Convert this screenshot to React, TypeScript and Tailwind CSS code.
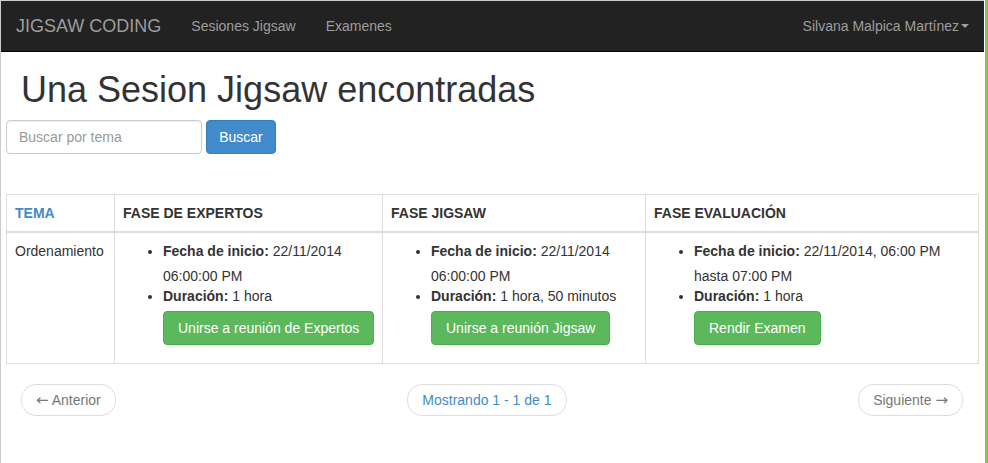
import { useState } from "react"

type Phase = {
    title: string
    start: [string, string]
    duration: string
    action: string
}

const phases: Phase[] = [
    {
        title: "FASE DE EXPERTOS",
        start: ["22/11/2014", "06:00:00 PM"],
        duration: "1 hora",
        action: "Unirse a reunión de Expertos"
    },
    {
        title: "FASE JIGSAW",
        start: ["22/11/2014", "06:00:00 PM"],
        duration: "1 hora, 50 minutos",
        action: "Unirse a reunión Jigsaw"
    },
    {
        title: "FASE EVALUACIÓN",
        start: ["22/11/2014, 06:00 PM", "hasta 07:00 PM"],
        duration: "1 hora",
        action: "Rendir Examen"
    }
]

const colWidths = ["w-[108px]", "w-[268px]", "w-[263px]", "w-[333px]"]

function Navbar() {
    return (
        <nav className="flex h-[51px] items-center border-b border-[#080808] bg-[#222] text-[#9d9d9d]">
            <a className="px-[15px] text-[18px] leading-5">JIGSAW CODING</a>
            <a className="px-[15px] leading-5">Sesiones Jigsaw</a>
            <a className="px-[15px] leading-5">Examenes</a>
            <a className="ml-auto flex items-center px-[15px] leading-5">
                Silvana Malpica Martínez
                <span className="ml-[2px] h-0 w-0 border-x-4 border-t-4 border-x-transparent border-t-[#9d9d9d]" />
            </a>
        </nav>
    )
}

function PhaseCell({ phase }: { phase: Phase }) {
    return (
        <td className="border border-[#ddd] p-2 align-top">
            <div className="mb-[10px] pl-10">
                <ul className="list-disc">
                    <li>
                        <div className="leading-5">
                            <b>Fecha de inicio:</b> {phase.start[0]}
                        </div>
                        <div className="mt-[5px] leading-5">{phase.start[1]}</div>
                    </li>
                    <li className="leading-5">
                        <b>Duración:</b> {phase.duration}
                    </li>
                </ul>
                <button className="mt-[5px] h-[34px] whitespace-nowrap rounded border border-[#4cae4c] bg-[#5cb85c] px-[14px] leading-5 text-white">
                    {phase.action}
                </button>
            </div>
        </td>
    )
}

export default function App() {
    const [query, setQuery] = useState("")

    return (
        <div className="flex h-[463px] w-[988px] overflow-hidden bg-white font-['Liberation_Sans',Arial,sans-serif] text-sm text-[#333]">
            <div className="flex w-[984px] flex-col border-l border-t border-[#ccc]">
                <Navbar />

                <h1 className="mt-[18px] mb-[10px] pl-[20px] text-[36px] leading-[1.1]">
                    Una Sesion Jigsaw encontradas
                </h1>

                <form className="ml-[5px] flex gap-1" onSubmit={(e) => e.preventDefault()}>
                    <input
                        value={query}
                        onChange={(e) => setQuery(e.target.value)}
                        placeholder="Buscar por tema"
                        className="h-[34px] w-[196px] rounded border border-[#ccc] px-3 text-sm text-[#555] placeholder:text-[#999] shadow-[inset_0_1px_1px_rgba(0,0,0,0.075)] outline-none"
                    />
                    <button className="h-[34px] w-[70px] rounded border border-[#357ebd] bg-[#428bca] text-white">
                        Buscar
                    </button>
                </form>

                <div className="ml-[5px] mt-10 w-[972px]">
                    <table className="w-full table-fixed border-collapse border border-[#ddd]">
                        <thead>
                            <tr>
                                <th className={`${colWidths[0]} border border-b-2 border-[#ddd] p-2 text-left leading-5 text-[#428bca]`}>
                                    TEMA
                                </th>
                                {phases.map((p, i) => (
                                    <th
                                        key={p.title}
                                        className={`${colWidths[i + 1]} border border-b-2 border-[#ddd] p-2 text-left leading-5`}
                                    >
                                        {p.title}
                                    </th>
                                ))}
                            </tr>
                        </thead>
                        <tbody>
                            <tr>
                                <td className="border border-[#ddd] p-2 align-top leading-5">Ordenamiento</td>
                                {phases.map((p) => (
                                    <PhaseCell key={p.title} phase={p} />
                                ))}
                            </tr>
                        </tbody>
                    </table>

                    <div className="mt-5 flex justify-between px-[15px]">
                        <a className="rounded-[15px] border border-[#ddd] px-[14px] py-[5px] leading-5 text-[#777]">
                            <span className="font-['DejaVu_Sans',sans-serif] text-[15px] leading-none">←</span> Anterior
                        </a>
                        <a className="rounded-[15px] border border-[#ddd] px-[14px] py-[5px] leading-5 text-[#428bca]">
                            Mostrando 1 - 1 de 1
                        </a>
                        <a className="rounded-[15px] border border-[#ddd] px-[14px] py-[5px] leading-5 text-[#777]">
                            Siguiente <span className="font-['DejaVu_Sans',sans-serif] text-[15px] leading-none">→</span>
                        </a>
                    </div>
                </div>
            </div>
            <div className="w-px bg-white" />
            <div className="w-[3px] bg-[#8bc34a]" />
        </div>
    )
}
